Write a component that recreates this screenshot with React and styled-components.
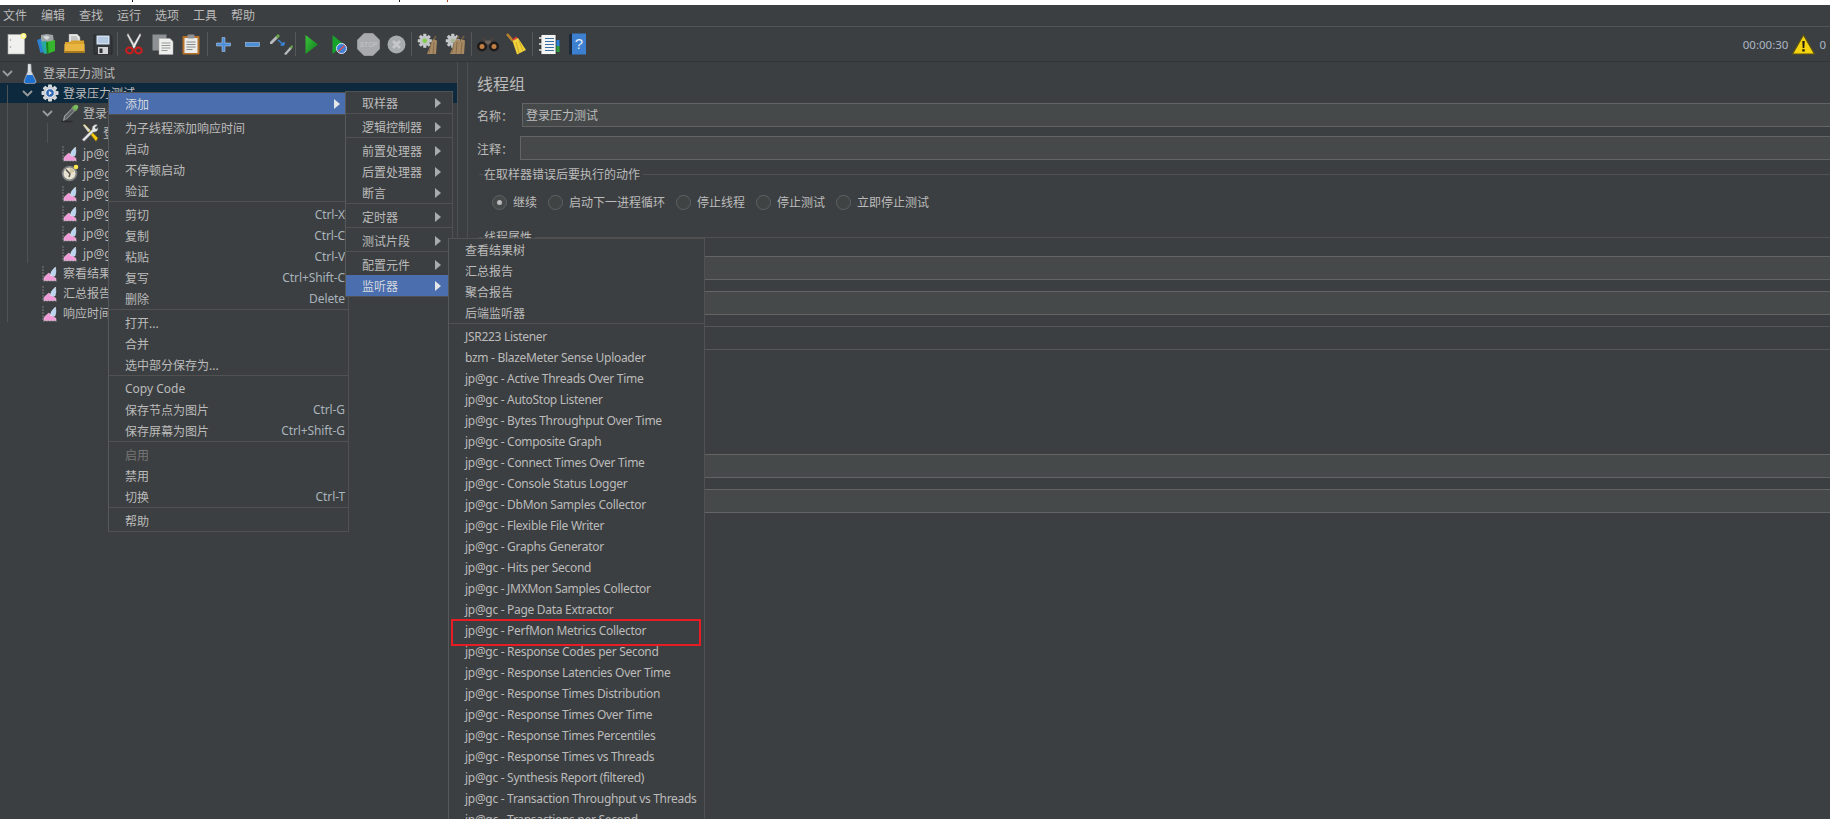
import React from 'react'
import styled, { createGlobalStyle } from 'styled-components'

const BG = '#3c3f41'
const TEXT = '#bbbbbb'
const LINE = '#515151'
const FONT = '"Noto Sans", "Noto Sans CJK SC", sans-serif'

const GlobalStyle = createGlobalStyle`
  html, body {
    margin: 0;
    padding: 0;
    background: ${BG};
  }
  body {
    font-family: ${FONT};
    font-size: 12px;
    color: ${TEXT};
  }
  * {
    box-sizing: border-box;
  }
`

const Page = styled.div`
  position: relative;
  width: 1830px;
  height: 819px;
  overflow: hidden;
  display: flex;
  flex-direction: column;
  background: ${BG};
`

const TopStrip = styled.div`
  height: 5px;
  background: #fff;
  display: flex;
  flex: none;
`

const StripMark = styled.span`
  width: 1px;
  height: 2px;
  margin-left: ${(p) => p.$gap}px;
  background: ${(p) => p.$color};
`

const MenuBar = styled.div`
  height: 22px;
  flex: none;
  display: flex;
  align-items: center;
  gap: 14px;
  padding-left: 3px;
  border-bottom: 1px solid #515456;
`

const MenuTitle = styled.span`
  line-height: 16px;
`

const Toolbar = styled.div`
  height: 35px;
  flex: none;
  display: flex;
  align-items: center;
  padding-left: 3px;
  border-bottom: 1px solid #323537;
`

const ToolSlot = styled.div`
  width: 28.5px;
  height: 24px;
  flex: none;
  display: flex;
  align-items: center;
  justify-content: center;
`

const ToolSep = styled.div`
  width: 1px;
  height: 24px;
  flex: none;
  background: #55585a;
  margin: 0 ${(p) => p.$right}px 0 ${(p) => p.$left}px;
`

const ToolStatus = styled.div`
  margin-left: auto;
  display: flex;
  align-items: center;
  padding-right: 4px;
  color: #a9b7c6;
  font-size: 11.5px;
`

const StatusIcon = styled.span`
  display: flex;
  margin: 0 4px 0 4px;
`

const Main = styled.div`
  flex: 1;
  display: flex;
  min-height: 0;
`

const TreePane = styled.div`
  position: relative;
  width: 458px;
  flex: none;
  padding-top: 1px;
  border-right: 1px solid #4d5052;
`

const Guide = styled.div`
  position: absolute;
  left: ${(p) => p.$left}px;
  top: ${(p) => p.$top}px;
  height: ${(p) => p.$height}px;
  width: 1px;
  background: #505355;
`

const TreeRow = styled.div`
  height: 20px;
  display: flex;
  align-items: center;
  white-space: nowrap;
  padding-left: ${(p) => p.$depth * 20}px;
  background: ${(p) => (p.$selected ? '#0d293e' : 'transparent')};
`

const Twist = styled.span`
  width: 19px;
  flex: none;
  display: flex;
  padding-left: 2px;
`

const TreeIcon = styled.span`
  width: 21px;
  margin-right: 3px;
  flex: none;
  height: 20px;
  display: flex;
  align-items: center;
  justify-content: center;
`

const Splitter = styled.div`
  width: 9px;
  flex: none;
`

const Panel = styled.div`
  flex: 1;
  min-width: 0;
  border-left: 1px solid #4d5052;
  padding: 10px 0 0 9px;
  display: flex;
  flex-direction: column;
`

const PanelTitle = styled.div`
  font-size: 16px;
  line-height: 24px;
  height: 31px;
`

const FieldRow = styled.div`
  display: flex;
  align-items: center;
  height: 24px;
  margin-bottom: ${(p) => p.$after}px;
`

const FieldLabel = styled.label`
  width: ${(p) => p.$width}px;
  flex: none;
  padding-top: 1px;
`

const TextField = styled.div`
  flex: 1;
  height: 24px;
  padding-left: 3px;
  line-height: 24px;
  background: #45494a;
  border: 1px solid #646464;
  border-right: none;
`

const Legend = styled.div`
  display: flex;
  align-items: center;
  height: 16px;
  margin-left: 2px;
  margin-top: ${(p) => p.$top}px;
  &::before {
    content: '';
    width: 4px;
    height: 1px;
    background: ${LINE};
    margin-right: 1px;
  }
  &::after {
    content: '';
    flex: 1;
    height: 1px;
    background: ${LINE};
    margin-left: 3px;
  }
`

const RadioRow = styled.div`
  display: flex;
  align-items: center;
  height: 16px;
  margin-top: 12px;
  padding-left: 15px;
`

const RadioItem = styled.div`
  display: flex;
  align-items: center;
  gap: 6px;
  margin-right: 11px;
`

const RadioDot = styled.span`
  width: 15px;
  height: 15px;
  flex: none;
  border-radius: 50%;
  border: 1px solid #5f6263;
  background: ${(p) => (p.$on ? '#45494a' : '#3f4344')};
  display: flex;
  align-items: center;
  justify-content: center;
  &::after {
    content: '';
    width: 5px;
    height: 5px;
    border-radius: 50%;
    background: ${(p) => (p.$on ? '#bbb' : 'transparent')};
  }
`

const WideField = styled.div`
  height: 24px;
  margin-left: 170px;
  margin-top: ${(p) => p.$top}px;
  background: ${(p) => (p.$off ? 'transparent' : '#45494a')};
  border-top: 1px solid ${(p) => (p.$off ? '#565656' : '#646464')};
  border-bottom: 1px solid ${(p) => (p.$off ? '#565656' : '#646464')};
`

const Menu = styled.div`
  position: absolute;
  left: ${(p) => p.$left}px;
  top: ${(p) => p.$top}px;
  width: ${(p) => p.$width}px;
  z-index: ${(p) => p.$layer};
  background: ${BG};
  border: 1px solid ${LINE};
  border-left-color: #56585a;
`

const Item = styled.div`
  height: 21px;
  display: flex;
  align-items: center;
  justify-content: space-between;
  padding: 0 3px 0 16px;
  white-space: nowrap;
  letter-spacing: ${(p) => (p.$tight ? '-0.3px' : 'normal')};
  background: ${(p) => (p.$active ? '#4b6eaf' : 'transparent')};
  color: ${(p) => (p.$disabled ? '#777777' : p.$active ? '#d4d8dc' : TEXT)};
`

const Shortcut = styled.span`
  color: #a9b3bb;
  letter-spacing: -0.1px;
`

const Arrow = styled.span`
  width: 0;
  height: 0;
  margin-right: ${(p) => p.$right}px;
  border-left: 6px solid ${(p) => (p.$active ? '#e4e6e8' : '#a8abad')};
  border-top: 5px solid transparent;
  border-bottom: 5px solid transparent;
`

const MenuSep = styled.div`
  height: 1px;
  margin-bottom: 2px;
  background: ${LINE};
`

const Callout = styled.div`
  position: absolute;
  left: 451px;
  top: 619px;
  width: 250px;
  height: 27px;
  z-index: 5;
  border: 2px solid #e81c24;
`

const Chevron = () => (
  <svg width="11" height="7" viewBox="0 0 11 7">
    <path d="M1 1l4.5 4.5L10 1" fill="none" stroke="#9a9d9f" strokeWidth="1.8" />
  </svg>
)

const Flask = () => (
  <svg width="14" height="21" viewBox="0 0 14 21">
    <path d="M5 1h3l.4 7L13 18q.5 2-1.5 2.5h-9Q.5 20 1 18L4.800 8z" fill="#d5d8dc" stroke="#8b9096" strokeWidth=".6" />
    <path d="M3.800 12h5.800L12.500 18q.3 2-1.500 2H3q-1.800 0-1.500-2z" fill="#1d6fd0" />
    <path d="M5.500 1h1v8h-1z" fill="#f2f3f5" />
  </svg>
)

const GearIcon = ({ size = 18, hub = '#2f66b0' }) => (
  <svg width={size} height={size} viewBox="0 0 18 18">
    {[0, 45, 90, 135, 180, 225, 270, 315].map((a) => (
      <rect key={a} x="7" y="0.500" width="4" height="4.500" rx=".8" fill="#d7dadd" transform={`rotate(${a} 9 9)`} />
    ))}
    <circle cx="9" cy="9" r="6.500" fill="#c9cdd1" />
    <circle cx="9" cy="9" r="4.300" fill={hub} stroke="#eef0f2" strokeWidth="1" />
    <path d="M7.800 6.800l3.200 2.200-3.200 2.200z" fill="#dfe8f5" />
  </svg>
)

const Dropper = ({ size = 20 }) => (
  <svg width={size} height={size} viewBox="0 0 20 20">
    <ellipse cx="7" cy="18.500" rx="6" ry="1" fill="#2b2d2e" />
    <path d="M13.500 2.500l4 4-2 2-4-4z" fill="#6aa84f" />
    <path d="M12 5l3 3-8 8-4 2 1-5z" fill="#9ea3a6" />
    <path d="M12 6l2 2-7.500 7.500L4.500 17l.5-3.500z" fill="#5e6366" />
    <circle cx="16" cy="4" r="2.300" fill="#7dbb5e" />
  </svg>
)

const ToolsIcon = () => (
  <svg width="18" height="18" viewBox="0 0 18 18">
    <path d="M2 1l2-.5L17 14l-2 3.500z" fill="#f2c811" stroke="#6b5808" strokeWidth=".5" />
    <path d="M2 1l1.500-.5L9 6 7 8z" fill="#d7dadd" />
    <path d="M1 15.500L11 5.500q-.5-3 2-4.500t3.500.2L14 3.500l1 1.500 2-1.500q.5 3-1.500 4t-3 .5L3 17.500z" fill="#e6e8ea" stroke="#55585a" strokeWidth=".6" />
  </svg>
)

const Listener = () => (
  <svg width="16" height="17" viewBox="0 0 16 17">
    <path d="M1 1v15h14" fill="none" stroke="#7a7d80" strokeWidth="1" strokeDasharray="2 1" />
    <path d="M2 15.500v-3q3-3.500 5-4.500 2 2 3 2.500t4 3v2z" fill="#f09ad8" stroke="#f7d3ec" strokeWidth=".5" />
    <path d="M8.500 10.500q-.5-4 5-8.500 1 5-.5 9z" fill="#b9d5f2" stroke="#eef4fb" strokeWidth=".5" />
  </svg>
)

const Timer = () => (
  <svg width="18" height="18" viewBox="0 0 18 18">
    <circle cx="8.500" cy="9.500" r="7.800" fill="#7d7f82" />
    <circle cx="8.500" cy="9.500" r="6" fill="#e8e2d0" />
    <path d="M5 5.500l4 4.500-1 3" fill="none" stroke="#55504a" strokeWidth="1.400" />
    <path d="M8.500 3.500a6 6 0 0 1 5 4L9 9.500z" fill="#c9b98e" opacity=".7" />
    <circle cx="15" cy="3" r="2.300" fill="#ffe94d" />
  </svg>
)

const NewDoc = () => (
  <svg width="20" height="22" viewBox="0 0 20 22">
    <rect x="1" y="1.500" width="16.500" height="19.500" fill="#f0f0ee" stroke="#a9aba8" strokeWidth=".6" />
    <circle cx="3.500" cy="7" r=".7" fill="#8d8f90" />
    <circle cx="3.500" cy="14" r=".7" fill="#8d8f90" />
    <circle cx="16.500" cy="3" r="3" fill="#fff07a" />
    <circle cx="16.500" cy="3" r="1.500" fill="#fffde0" />
  </svg>
)

const Templates = () => (
  <svg width="20" height="22" viewBox="0 0 20 22">
    <path d="M5 2l6-1 6 1 1 8H5z" fill="#9ea3a6" />
    <path d="M7 4l3-1.500L14 4l-3 3z" fill="#d5d8da" />
    <path d="M1 7l4-1.500L8 19l-3.500 1z" fill="#2d7fd1" />
    <path d="M5 9l4-1 3 1 .5 11-4.500 1z" fill="#27a9a0" />
    <path d="M10 9l9-2v11l-8 3z" fill="#35b62c" />
    <path d="M10 9l2 .5.5 11L11 21z" fill="#1b7f1e" />
  </svg>
)

const OpenFolder = () => (
  <svg width="21" height="20" viewBox="0 0 21 20">
    <path d="M5 0h8l3 3v8H5z" fill="#e8e8e6" stroke="#9a9a98" strokeWidth=".5" />
    <path d="M7 3h6M7 5h7M7 7h7" stroke="#8f9192" strokeWidth=".8" />
    <path d="M1 8h5l1.500-1.500H20l.5 11.500q0 1-1 1H1.500q-1 0-1-1z" fill="#d9a22d" />
    <path d="M.5 10h20v8q0 1-1 1H1.500q-1 0-1-1z" fill="#e8b543" />
    <path d="M.5 17h20v1q0 1-1 1H1.500q-1 0-1-1z" fill="#a77a1d" />
  </svg>
)

const Floppy = () => (
  <svg width="20" height="21" viewBox="0 0 20 21">
    <path d="M1 1h16l2 2v17H1z" fill="#34383b" stroke="#1d1f20" strokeWidth=".6" />
    <rect x="3.500" y="1.500" width="13" height="9" fill="#cfe0f2" />
    <path d="M5 4h10M5 6h10M5 8h10" stroke="#8ea8c4" strokeWidth=".8" />
    <rect x="5" y="13" width="10" height="7" fill="#d2d4d6" />
    <rect x="6.500" y="14.500" width="3" height="4.500" fill="#2f3234" />
  </svg>
)

const Scissors = () => (
  <svg width="18" height="22" viewBox="0 0 18 22">
    <path d="M3 .5l7.500 13-1.500 2L2 2z" fill="#e6e6e6" stroke="#9a9a9a" strokeWidth=".4" />
    <path d="M15 .5L7.500 13.500l1.500 2L16 2z" fill="#f5f5f5" stroke="#9a9a9a" strokeWidth=".4" />
    <ellipse cx="4.500" cy="17.500" rx="3.300" ry="3" fill="none" stroke="#d51c1c" strokeWidth="1.900" />
    <ellipse cx="13.500" cy="17.500" rx="3.300" ry="3" fill="none" stroke="#d51c1c" strokeWidth="1.900" />
  </svg>
)

const CopyIcon = () => (
  <svg width="22" height="21" viewBox="0 0 22 21">
    <rect x="0.500" y="0.500" width="14" height="16" fill="#8e9193" />
    <path d="M7 4.500h11l3 3V20.500H7z" fill="#efefed" stroke="#a9aba8" strokeWidth=".5" />
    <path d="M9.500 9h9M9.500 11.500h9M9.500 14h9M9.500 16.500h6" stroke="#8b8d8e" strokeWidth=".9" />
  </svg>
)

const Paste = () => (
  <svg width="18" height="21" viewBox="0 0 18 21">
    <rect x="0.500" y="2" width="17" height="18.500" rx="1" fill="#b5732a" />
    <rect x="2.500" y="4" width="13" height="15" fill="#ececea" />
    <path d="M4.500 8h9M4.500 10.500h9M4.500 13h9M4.500 15.500h6" stroke="#7e8082" strokeWidth=".9" />
    <rect x="5.500" y="0.500" width="7" height="4" rx="1" fill="#8f9294" />
  </svg>
)

const Plus = () => (
  <svg width="15" height="15" viewBox="0 0 15 15">
    <path d="M6 0.500h3V6h5.500v3H9v5.500H6V9H.5V6H6z" fill="#4d8fd6" stroke="#bcd7f2" strokeWidth=".5" />
  </svg>
)

const Minus = () => (
  <svg width="15" height="5" viewBox="0 0 15 5">
    <rect x="0.500" y="0.500" width="14" height="4" fill="#4d8fd6" stroke="#bcd7f2" strokeWidth=".5" />
  </svg>
)

const Toggle = () => (
  <svg width="24" height="22" viewBox="0 0 24 22">
    <path d="M1 9l6-6 2 2-6 6H1z" fill="#b7bbbe" />
    <path d="M6.500 3.500L9 1l2 2-2.500 2.500z" fill="#6aa84f" />
    <path d="M15 21l6-7 2 1.500-6 6.500z" fill="#b7bbbe" />
    <path d="M20.500 14.500L23 12l1 2-2 2z" fill="#6aa84f" />
    <path d="M9 7l6 5M15 12v-3M15 12h-3.500" fill="none" stroke="#3a86dc" strokeWidth="1.500" />
  </svg>
)

const Play = ({ w = 13 }) => (
  <svg width={w} height="19" viewBox="0 0 13 19">
    <defs>
      <linearGradient id="playFill" x1="0" y1="0" x2="1" y2="1">
        <stop offset="0" stopColor="#3cc43c" />
        <stop offset="1" stopColor="#0d7a1c" />
      </linearGradient>
    </defs>
    <path d="M.5 0v19L13 9.500z" fill="url(#playFill)" />
  </svg>
)

const PlayNoPause = () => (
  <svg width="15" height="19" viewBox="0 0 15 19">
    <path d="M.5 0v19L12 9.500z" fill="#17a32b" />
    <circle cx="9.500" cy="13.500" r="5" fill="#3d7fd6" stroke="#dfe9f5" strokeWidth="1" />
    <path d="M6.500 16.500l6-6" stroke="#e14b4b" strokeWidth="1.400" />
  </svg>
)

const StopIcon = () => (
  <svg width="23" height="23" viewBox="0 0 23 23">
    <path d="M7 .5h9L22.500 7v9L16 22.500H7L.5 16V7z" fill="#a8abad" stroke="#b8babc" strokeWidth=".5" />
    <text x="11.500" y="14" textAnchor="middle" fontSize="6.500" fontWeight="700" fill="#bdbfc1" fontFamily="Liberation Sans">STOP</text>
  </svg>
)

const Shutdown = () => (
  <svg width="19" height="19" viewBox="0 0 19 19">
    <circle cx="9.500" cy="9.500" r="9" fill="#a8abad" />
    <path d="M6 6l7 7M13 6l-7 7" stroke="#c6c8ca" strokeWidth="2.600" />
  </svg>
)

const Broom = ({ x }) => (
  <g transform={`translate(${x} 0)`}>
    <path d="M13 3l-2 3" stroke="#6e5a3e" strokeWidth="2" />
    <path d="M10 6l4 1.500-1 13.500H4z" fill="#a78a63" />
    <path d="M8 9l-2 11M11 9l-1 12" stroke="#7a6244" strokeWidth=".8" />
  </g>
)

const Clear = ({ all }) => (
  <svg width="21" height="22" viewBox="0 0 21 22">
    <g transform="scale(.78)">
      {[0, 45, 90, 135, 180, 225, 270, 315].map((a) => (
        <rect key={a} x="8" y="1" width="4" height="4" fill="#c9ccce" transform={`rotate(${a} 10 10)`} />
      ))}
      <circle cx="10" cy="10" r="6.500" fill="#c2c5c7" />
      <circle cx="10" cy="10" r="3" fill={all ? '#aab69a' : '#84cc4e'} />
    </g>
    <Broom x={6} />
    {all && <Broom x={1} />}
  </svg>
)

const Binoculars = () => (
  <svg width="22" height="15" viewBox="0 0 22 15">
    <path d="M6 1h3v5H6zM13 1h3v5h-3z" fill="#4a4340" />
    <rect x="8" y="3.500" width="6" height="4" fill="#6b5f58" />
    <circle cx="5" cy="9.500" r="5" fill="#1e1b1a" />
    <circle cx="17" cy="9.500" r="5" fill="#1e1b1a" />
    <circle cx="5" cy="9.500" r="2.500" fill="#c27f45" />
    <circle cx="17" cy="9.500" r="2.500" fill="#c27f45" />
  </svg>
)

const YellowBroom = () => (
  <svg width="21" height="22" viewBox="0 0 21 22">
    <path d="M1 1l6 7" stroke="#b7822d" strokeWidth="2.600" />
    <path d="M6 6.500l4-3 3 3-3 3z" fill="#d33b3b" />
    <path d="M6.500 8L12 5l8 12-9 4.500z" fill="#f0d23c" />
    <path d="M10 9l3 11M13 8l4 10" stroke="#c9a520" strokeWidth=".8" />
  </svg>
)

const LogViewer = () => (
  <svg width="21" height="21" viewBox="0 0 21 21">
    <rect x="16" y="6" width="4.500" height="6" fill="#2b7fd6" />
    <rect x="16" y="12" width="4.500" height="6" fill="#2e9e3a" />
    <rect x="2" y="0.500" width="15" height="20" fill="#f4f4f2" stroke="#23272a" strokeWidth=".7" />
    <path d="M6 4.500h9M6 7.500h9M6 10.500h9M6 13.500h9M6 16.500h9" stroke="#3a6ea8" strokeWidth="1" />
    <path d="M0 4h4M0 10h4M0 16h4" stroke="#e8e8e8" strokeWidth="1.600" />
  </svg>
)

const HelpBook = () => (
  <svg width="17" height="22" viewBox="0 0 17 22">
    <path d="M0 1.500L3 .5v21H0z" fill="#1c2a3c" />
    <rect x="3" y="0.500" width="14" height="21" fill="#3d7fd0" />
    <text x="10" y="16" textAnchor="middle" fontSize="15" fill="#e4edf7" fontFamily="Liberation Sans">?</text>
  </svg>
)

const Warn = () => (
  <svg width="23" height="21" viewBox="0 0 23 21">
    <path d="M11.500 1L22.500 20H.5z" fill="#f5d40f" stroke="#5c5312" strokeWidth="1.200" />
    <path d="M10.300 7h2.400l-.4 7h-1.600zM10.300 15.300h2.400v2.200h-2.400z" fill="#1e1c10" />
  </svg>
)

const toolGroups = [
  { items: [NewDoc, Templates, OpenFolder, Floppy], left: 0, right: 2 },
  { items: [Scissors, CopyIcon, Paste], left: 1, right: 2 },
  { items: [Plus, Minus, Toggle], left: 0, right: 1 },
  { items: [Play, PlayNoPause, StopIcon, Shutdown], left: 0, right: 1 },
  { items: [() => <Clear />, () => <Clear all />], left: 1, right: 2 },
  { items: [Binoculars, YellowBroom], left: 1, right: 2 },
  { items: [LogViewer, HelpBook] },
]

const treeRows = [
  { depth: 0, open: true, icon: <Flask />, label: '登录压力测试' },
  { depth: 1, open: true, icon: <GearIcon />, label: '登录压力测试', selected: true },
  { depth: 2, open: true, icon: <Dropper />, label: '登录请求 HTTP' },
  { depth: 3, icon: <ToolsIcon />, label: '登录信息配置' },
  { depth: 2, icon: <Listener />, label: 'jp@gc - Active Threads' },
  { depth: 2, icon: <Timer />, label: 'jp@gc - Ultimate' },
  { depth: 2, icon: <Listener />, label: 'jp@gc - Hits per Second' },
  { depth: 2, icon: <Listener />, label: 'jp@gc - Response Times' },
  { depth: 2, icon: <Listener />, label: 'jp@gc - Response Codes' },
  { depth: 2, icon: <Listener />, label: 'jp@gc - Transactions' },
  { depth: 1, icon: <Listener />, label: '察看结果树' },
  { depth: 1, icon: <Listener />, label: '汇总报告' },
  { depth: 1, icon: <Listener />, label: '响应时间图' },
]

const contextMenu = [
  [{ label: '添加', active: true, sub: true }],
  [{ label: '为子线程添加响应时间' }, { label: '启动' }, { label: '不停顿启动' }, { label: '验证' }],
  [
    { label: '剪切', key: 'Ctrl-X' },
    { label: '复制', key: 'Ctrl-C' },
    { label: '粘贴', key: 'Ctrl-V' },
    { label: '复写', key: 'Ctrl+Shift-C' },
    { label: '删除', key: 'Delete' },
  ],
  [{ label: '打开...' }, { label: '合并' }, { label: '选中部分保存为...' }],
  [
    { label: 'Copy Code' },
    { label: '保存节点为图片', key: 'Ctrl-G' },
    { label: '保存屏幕为图片', key: 'Ctrl+Shift-G' },
  ],
  [{ label: '启用', disabled: true }, { label: '禁用' }, { label: '切换', key: 'Ctrl-T' }],
  [{ label: '帮助' }],
]

const addMenu = [
  [{ label: '取样器' }],
  [{ label: '逻辑控制器' }],
  [{ label: '前置处理器' }, { label: '后置处理器' }, { label: '断言' }],
  [{ label: '定时器' }],
  [{ label: '测试片段' }],
  [{ label: '配置元件' }, { label: '监听器', active: true }],
]

const listeners = [
  'JSR223 Listener',
  'bzm - BlazeMeter Sense Uploader',
  'jp@gc - Active Threads Over Time',
  'jp@gc - AutoStop Listener',
  'jp@gc - Bytes Throughput Over Time',
  'jp@gc - Composite Graph',
  'jp@gc - Connect Times Over Time',
  'jp@gc - Console Status Logger',
  'jp@gc - DbMon Samples Collector',
  'jp@gc - Flexible File Writer',
  'jp@gc - Graphs Generator',
  'jp@gc - Hits per Second',
  'jp@gc - JMXMon Samples Collector',
  'jp@gc - Page Data Extractor',
  'jp@gc - PerfMon Metrics Collector',
  'jp@gc - Response Codes per Second',
  'jp@gc - Response Latencies Over Time',
  'jp@gc - Response Times Distribution',
  'jp@gc - Response Times Over Time',
  'jp@gc - Response Times Percentiles',
  'jp@gc - Response Times vs Threads',
  'jp@gc - Synthesis Report (filtered)',
  'jp@gc - Transaction Throughput vs Threads',
  'jp@gc - Transactions per Second',
]

const radios = ['继续', '启动下一进程循环', '停止线程', '停止测试', '立即停止测试']

const MenuGroups = ({ groups, arrowRight }) =>
  groups.map((group, i) => (
    <React.Fragment key={i}>
      {i > 0 && <MenuSep />}
      {group.map((it) => (
        <Item key={it.label} $active={it.active} $disabled={it.disabled} $tight={it.tight}>
          <span>{it.label}</span>
          {it.key && <Shortcut>{it.key}</Shortcut>}
          {(it.sub || arrowRight) && <Arrow $right={arrowRight || 5} $active={it.active} />}
        </Item>
      ))}
    </React.Fragment>
  ))

const App = () => (
  <Page>
    <GlobalStyle />
    <TopStrip>
      <StripMark $gap={132} $color="#123" />
      <StripMark $gap={266} $color="#222" />
      <StripMark $gap={47} $color="#b5482a" />
    </TopStrip>
    <MenuBar>
      {['文件', '编辑', '查找', '运行', '选项', '工具', '帮助'].map((t) => (
        <MenuTitle key={t}>{t}</MenuTitle>
      ))}
    </MenuBar>
    <Toolbar>
      {toolGroups.map((group, i) => (
        <React.Fragment key={i}>
          {group.items.map((Icon, j) => (
            <ToolSlot key={j}>
              <Icon />
            </ToolSlot>
          ))}
          {group.right !== undefined && <ToolSep $left={group.left} $right={group.right} />}
        </React.Fragment>
      ))}
      <ToolStatus>
        00:00:30
        <StatusIcon>
          <Warn />
        </StatusIcon>
        0
      </ToolStatus>
    </Toolbar>
    <Main>
      <TreePane>
        {treeRows.map((row, i) => (
          <TreeRow key={i} $depth={row.depth} $selected={row.selected}>
            <Twist>{row.open && <Chevron />}</Twist>
            <TreeIcon>{row.icon}</TreeIcon>
            <span>{row.label}</span>
          </TreeRow>
        ))}
        <Guide $left={7} $top={23} $height={237} />
        <Guide $left={27} $top={41} $height={160} />
        <Guide $left={47} $top={61} $height={20} />
      </TreePane>
      <Splitter />
      <Panel>
        <PanelTitle>线程组</PanelTitle>
        <FieldRow $after={9}>
          <FieldLabel $width={45}>名称：</FieldLabel>
          <TextField>登录压力测试</TextField>
        </FieldRow>
        <FieldRow $after={5}>
          <FieldLabel $width={43}>注释：</FieldLabel>
          <TextField />
        </FieldRow>
        <Legend $top={1}>在取样器错误后要执行的动作</Legend>
        <RadioRow>
          {radios.map((r, i) => (
            <RadioItem key={r}>
              <RadioDot $on={i === 0} />
              {r}
            </RadioItem>
          ))}
        </RadioRow>
        <Legend $top={19}>线程属性</Legend>
        <WideField $top={11} />
        <WideField $top={11} />
        <WideField $top={11} $off />
        <WideField $top={104} />
        <WideField $top={11} />
      </Panel>
    </Main>
    <Menu $left={108} $top={92} $width={241} $layer={2}>
      <MenuGroups groups={contextMenu} />
    </Menu>
    <Menu $left={345} $top={91} $width={108} $layer={3}>
      <MenuGroups groups={addMenu} arrowRight={8} />
    </Menu>
    <Menu $left={448} $top={238} $width={257} $layer={4}>
      <MenuGroups
        groups={[
          [{ label: '查看结果树' }, { label: '汇总报告' }, { label: '聚合报告' }, { label: '后端监听器' }],
          listeners.map((label) => ({ label, tight: true })),
        ]}
      />
    </Menu>
    <Callout />
  </Page>
)

export default App
